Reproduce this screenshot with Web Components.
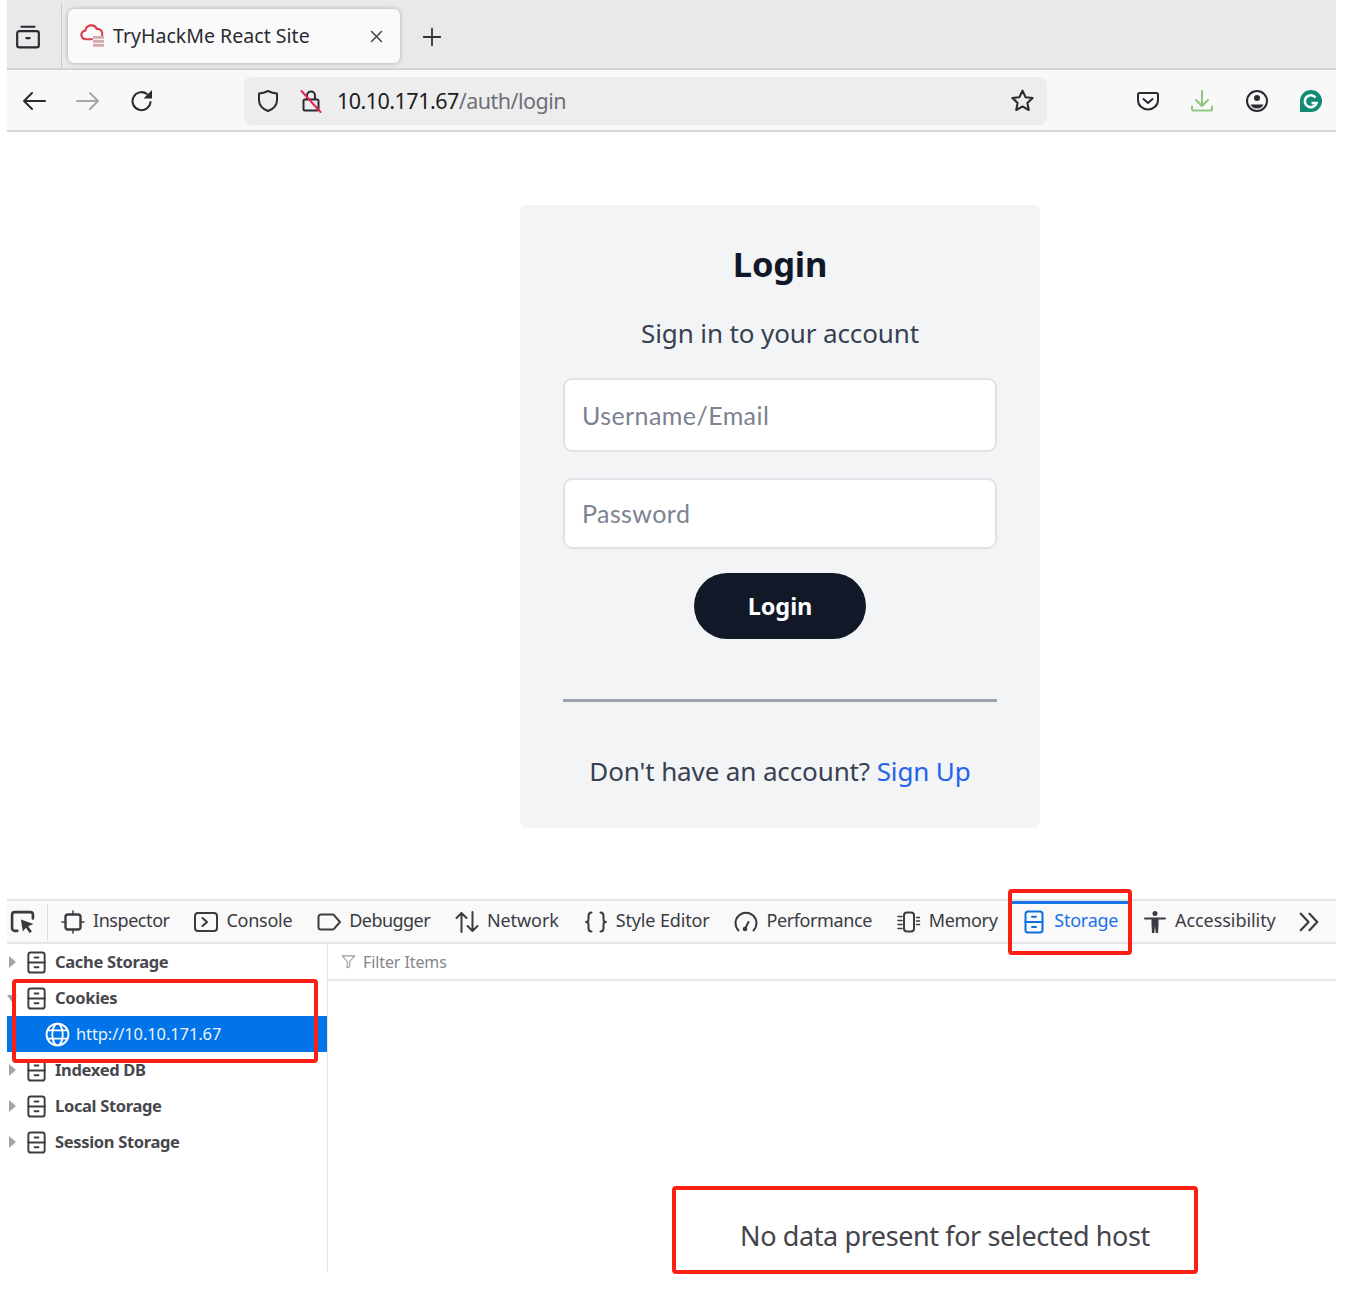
<!DOCTYPE html>
<html lang="en"><head><meta charset="utf-8"><title>TryHackMe React Site</title>
<style>
html,body{margin:0;padding:0;background:#fff}
body{font-family:"Noto Sans","Open Sans",sans-serif;width:1371px;height:1294px;position:relative;overflow:hidden}
</style></head><body>
<app-window></app-window>
<hl-box style="--x:1008px;--y:889px;--w:124px;--h:66px"></hl-box>
<hl-box style="--x:12px;--y:979px;--w:306px;--h:84px"></hl-box>
<hl-box style="--x:672px;--y:1186px;--w:526px;--h:88px"></hl-box>
<script>
const P={
archive:'<path d="M6 2.500h12M2 8.500a2 2 0 0 1 2-2h16a2 2 0 0 1 2 2v11a2 2 0 0 1-2 2H4a2 2 0 0 1-2-2z"/><path d="M10.500 13h3"/>',
back:'<path d="M23 12H2M10 4 2 12l8 8"/>',
reload:'<path d="M20.500 13a9 9 0 1 1-3.500-8"/><path d="M22 1v8.500h-8.500z" fill="currentColor" stroke="none"/>',
shield:'<path d="M12 2c3 1.600 6 2.400 9 2.600V11c0 5.500-3.500 9-9 11-5.500-2-9-5.500-9-11V4.600C6 4.400 9 3.600 12 2z"/>',
lock:'<path d="M8 10V6.500a4 4 0 0 1 8 0V10M6 10.500h12a1.500 1.500 0 0 1 1.500 1.500v8a1.500 1.500 0 0 1-1.500 1.500H6A1.500 1.500 0 0 1 4.500 20v-8A1.500 1.500 0 0 1 6 10.500z"/><path d="M2.500 2 21.500 23" stroke="#e22850"/>',
star:'<path d="m12 2.500 2.900 6.300 6.800.8-5 4.700 1.300 6.800-6-3.400-6 3.400 1.300-6.800-5-4.700 6.800-.8z"/>',
pocket:'<path d="M3.500 4h17A1.500 1.500 0 0 1 22 5.500V11c0 5.500-4.500 9.500-10 9.500S2 16.500 2 11V5.500A1.500 1.500 0 0 1 3.500 4z"/><path d="m7.500 10 4.500 4 4.500-4"/>',
download:'<path d="M12 2v15M6 11l6 6 6-6M2 17.500V20.500a1 1 0 0 0 1 1h18a1 1 0 0 0 1-1v-3"/>',
account:'<circle cx="12" cy="12" r="10"/><circle cx="12" cy="9" r="3" fill="currentColor" stroke="none"/><path d="M5.500 15.500h13c-1 2.800-3.500 4-6.500 4s-5.500-1.200-6.500-4z" fill="currentColor" stroke="none"/>',
close:'<path d="m5 5 14 14M19 5 5 19"/>',
plus:'<path d="M12 3v18M3 12h18"/>',
pick:'<path d="M9 3H4.500a2.500 2.500 0 0 0-2.500 2.500v13a2.500 2.500 0 0 0 2.500 2.500H7M9 3h10.500A2.500 2.500 0 0 1 22 5.500V9" stroke-width="2.500"/><path d="m10.500 10 12 4.500-5 2 3.500 5-2.200 1.500-3.500-5-3 3.500z" fill="currentColor" stroke="none"/>',
inspector:'<rect x="4.500" y="4.500" width="15" height="15" rx="2.500" stroke-width="2.400"/><path d="M12 1V4.500M12 19.500V23M1 12H4.500M19.500 12H23" stroke-width="1.500"/>',
console:'<rect x="1" y="3" width="22" height="18" rx="3"/><path d="m8.500 8 4.500 4-4.500 4"/>',
debugger:'<path d="M4 4.500h11.500a2 2 0 0 1 1.500.7l6 6.800-6 6.800a2 2 0 0 1-1.500.7H4a2.500 2.500 0 0 1-2.500-2.500V7A2.500 2.500 0 0 1 4 4.500z"/>',
network:'<path d="M6.500 22V3M1.500 8l5-5 5 5M17.500 2v19M12.500 16l5 5 5-5"/>',
style:'<path d="M7.500 2.500C5 2.500 4.500 4 4.500 6v3.500c0 1.500-.7 2.500-2.500 2.500 1.800 0 2.500 1 2.500 2.500V18c0 2 .5 3.500 3 3.500M16.500 2.500c2.500 0 3 1.500 3 3.500v3.500c0 1.500.7 2.500 2.500 2.500-1.800 0-2.500 1-2.500 2.500V18c0 2-.5 3.500-3 3.500"/>',
perf:'<path d="M4.500 20.500A10.500 10.500 0 1 1 19.500 20.500"/><circle cx="11" cy="19" r="2.300" fill="currentColor" stroke="none"/><path d="m11 19 3.500-7"/>',
memory:'<rect x="7" y="2.500" width="10" height="19" rx="3"/><path d="M1 6.500h4M1 10.500h4M1 14.500h4M1 18.500h4M19.500 7.500h3M19.500 11h3M19.500 14.500h3" stroke-width="1.500"/>',
cabinet:'<rect x="3.500" y="1.500" width="17" height="21" rx="2.500"/><path d="M3.500 12h17M10 6.800h4M10 17h4"/>',
access:'<circle cx="12" cy="3.500" r="2.500" fill="currentColor" stroke="none"/><path d="M2 8.500h20"/><path d="M8.500 8h7v6.500l-.5 8.500h-2.300L12 16l-.7 7H9l-.5-8.500z" fill="currentColor" stroke="none"/>',
chevrons:'<path d="m3 3 8.500 9L3 21M12.500 3l8.500 9-8.500 9"/>',
funnel:'<path d="M2 3h20l-8 9v8l-4 2V12z"/>',
globe:'<circle cx="12" cy="12" r="10.500"/><ellipse cx="12" cy="12" rx="5" ry="10.500"/><path d="M2.500 8h19M2.500 16h19"/>',
cloud:'<path d="M11 15H5.500a4 4 0 0 1-.5-8 5.500 5.500 0 0 1 10.500-1.500 4.500 4.500 0 0 1 5 5.500"/>'
};
function def(name,html,extra){
  const t=document.createElement('template');t.innerHTML=html;
  customElements.define(name,class extends HTMLElement{
    constructor(){super();this.attachShadow({mode:'open'}).appendChild(t.content.cloneNode(true));}
    connectedCallback(){extra&&extra.call(this);}
  });
}
def('x-icon',`<style>:host{display:inline-flex;flex:none;width:var(--s,24px);height:var(--s,24px)}svg{width:100%;height:100%;fill:none;stroke:currentColor;stroke-width:var(--sw,2);stroke-linecap:round;stroke-linejoin:round;overflow:visible}</style><svg viewBox="0 0 24 24"></svg>`,function(){this.shadowRoot.querySelector('svg').innerHTML=P[this.getAttribute('name')]||'';});
def('hl-box',`<style>:host{position:absolute;left:var(--x);top:var(--y);width:var(--w);height:var(--h);box-sizing:border-box;border:4px solid #fb2013;border-radius:4px;pointer-events:none}</style>`);

def('tab-bar',`<style>
:host{display:flex;align-items:stretch;height:68px;background:#e9e9e9;border-bottom:2px solid #d3d3d3;color:#2b2a33;box-sizing:content-box}
.side{width:55px;display:flex;align-items:center;padding-top:2px;box-sizing:border-box;padding-left:8px;border-right:1px solid #c9c9c9;margin-top:3px}
.tab{width:332px;height:54px;margin:9px 0 0 6px;background:#fafafa;border-radius:6px;box-shadow:0 0 4px rgba(0,0,0,.28);display:flex;align-items:center;box-sizing:border-box;padding-left:12px}
.fav{position:relative;width:26px;height:26px;flex:none;color:#d8404a}
.fav i{position:absolute;left:13px;top:13px;width:11px;height:11px;background:repeating-linear-gradient(180deg,#c9a0a4 0 2px,#e6b0b4 2px 3px,#f2f0f0 3px 4px);opacity:.9}
.title{margin:-1px 0 0 7px;font-size:19.500px;white-space:nowrap;width:255px;letter-spacing:.03px}
.close{color:#444}
.plus{margin:5px 0 0 21px;align-self:center;color:#333}
</style>
<div class="side"><x-icon name="archive" style="--s:26px"></x-icon></div>
<div class="tab"><span class="fav"><x-icon name="cloud" style="--s:26px"></x-icon><i></i></span><span class="title">TryHackMe React Site</span><x-icon class="close" name="close" style="--s:17px;--sw:2.200"></x-icon></div>
<x-icon class="plus" name="plus" style="--s:22px;--sw:2"></x-icon>`);

def('nav-bar',`<style>
:host{display:flex;align-items:center;height:60px;background:#f8f8f8;border-bottom:2px solid #d8d8d8;color:#2b2a33}
.l{display:flex;gap:30px;margin:2px 0 0 15px;width:222px;flex:none}
.url{width:803px;height:48px;background:#ededed;border-radius:7px;display:flex;align-items:center;box-sizing:border-box;padding:0 12px;margin-top:1px;flex:none}
.url .txt{margin-left:14px;font-size:21.500px;white-space:nowrap;flex:1;letter-spacing:-.52px}
.txt b{font-weight:400;color:#1c1b22}.txt span{color:#6f6f78}
.r{display:flex;margin:2px 0 0 89px;gap:30.300px;align-items:center}
</style>
<div class="l"><x-icon name="back"></x-icon><x-icon name="back" style="color:#a6a6a9;transform:scaleX(-1)"></x-icon><x-icon name="reload"></x-icon></div>
<div class="url"><x-icon name="shield" style="--s:24px"></x-icon><x-icon name="lock" style="--s:24px;margin-left:19px"></x-icon><div class="txt"><b>10.10.171.67</b><span>/auth/login</span></div><x-icon name="star" style="--s:25px"></x-icon></div>
<div class="r"><x-icon name="pocket"></x-icon><x-icon name="download" style="color:#93c47d"></x-icon><x-icon name="account"></x-icon><gram-logo></gram-logo></div>`);

def('gram-logo',`<style>:host{display:inline-flex;width:24px;height:24px}svg{width:24px;height:24px}</style>
<svg viewBox="0 0 24 24"><path d="M12 1a11 11 0 1 1 0 22H1V12A11 11 0 0 1 12 1z" fill="#138a72"/><path d="M16.500 8.500a6 6 0 1 0 1 5.500H12.500" fill="none" stroke="#fff" stroke-width="2.600"/></svg>`);

def('login-card',`<style>
:host{display:block;width:520px;box-sizing:border-box;background:#f3f4f6;border-radius:6px;padding:39px 44px 39px;text-align:center;font-family:"Noto Sans",sans-serif}
h2{margin:0;font-size:34.500px;line-height:40px;font-weight:700;color:#111827;letter-spacing:-.2px}
p.s{margin:31px 0 0;font-size:26px;line-height:36px;color:#374151;letter-spacing:-.12px}
.in{box-sizing:border-box;display:flex;align-items:center;background:#fff;border:2px solid #e0e2e6;border-radius:9px;padding:0 0 0 17px;text-align:left;color:#7b8290;font-size:25px;font-family:Lato,sans-serif;letter-spacing:.42px}
.a{height:74px;margin:27px -1px 0}.b{height:71px;margin:26px -1px 0;padding-bottom:2px}
.btn{display:flex;align-items:center;justify-content:center;width:172px;height:66px;border-radius:33px;background:#111827;color:#fff;font-weight:700;font-size:23.500px;margin:24px auto 0;letter-spacing:-.1px}
hr{border:0;height:3px;background:#9ca3af;margin:60px -1px 0 -1px}
p.f{margin:51px 0 0;font-size:26px;line-height:36px;color:#374151;letter-spacing:-.12px}
a{color:#2563eb;text-decoration:none}
</style>
<h2>Login</h2><p class="s">Sign in to your account</p>
<div class="in a">Username/Email</div><div class="in b">Password</div>
<div class="btn">Login</div><hr>
<p class="f">Don't have an account? <a href="#">Sign Up</a></p>`);

def('dt-tab',`<style>
:host{display:flex;align-items:center;gap:8px;color:#3b3b42;font-size:18px;white-space:nowrap}
:host([on]){color:#1a73e8}
span{margin-top:-3px}
</style><slot name="i"></slot><span><slot></slot></span>`);

def('dt-bar',`<style>
:host{display:flex;align-items:center;box-sizing:border-box;height:45px;background:#f9f9fa;border-top:2px solid #e4e4e6;border-bottom:2px solid #e4e4e6;padding-left:3px;position:relative}
.p{color:#38383d;margin-right:13px;padding-right:12px;border-right:1px solid #dcdcdc;display:flex;height:36px;align-items:center}
.tabs{display:flex;gap:24.800px;height:100%}
.on{position:absolute;left:1005px;width:118px;top:0;height:3px;background:#1a73e8}
.c{margin-left:22px;color:#3b3b42}
</style>
<div class="p"><x-icon name="pick" style="--s:25px"></x-icon></div>
<div class="tabs">
<dt-tab style="letter-spacing:-.44px"><x-icon slot="i" name="inspector"></x-icon>Inspector</dt-tab>
<dt-tab style="letter-spacing:-.24px"><x-icon slot="i" name="console"></x-icon>Console</dt-tab>
<dt-tab style="letter-spacing:-.54px"><x-icon slot="i" name="debugger"></x-icon>Debugger</dt-tab>
<dt-tab style="letter-spacing:-.07px"><x-icon slot="i" name="network"></x-icon>Network</dt-tab>
<dt-tab style="letter-spacing:-.13px"><x-icon slot="i" name="style"></x-icon>Style Editor</dt-tab>
<dt-tab style="letter-spacing:-.4px"><x-icon slot="i" name="perf"></x-icon>Performance</dt-tab>
<dt-tab style="letter-spacing:-.33px"><x-icon slot="i" name="memory"></x-icon>Memory</dt-tab>
<dt-tab on style="letter-spacing:-.26px"><x-icon slot="i" name="cabinet" style="color:#0a6fe0"></x-icon>Storage</dt-tab>
<dt-tab style="letter-spacing:-.06px"><x-icon slot="i" name="access"></x-icon>Accessibility</dt-tab>
</div><x-icon class="c" name="chevrons" style="--s:22px;--sw:2.400"></x-icon><div class="on"></div>`);

def('tree-row',`<style>
:host{display:flex;align-items:center;height:36px;font-weight:700;font-size:16.500px;color:#47474d;letter-spacing:-.33px;white-space:nowrap}
.t{width:0;height:0;margin-left:2px;border-left:7px solid #a3a3a6;border-top:6px solid transparent;border-bottom:6px solid transparent}
:host([open]) .t{margin-left:0;border-left:5px solid transparent;border-right:5px solid transparent;border-top:7px solid #a3a3a6;border-bottom:0}
:host([open]) x-icon{margin-left:8px}
x-icon{margin-left:9px;margin-right:7px;color:#3c3c42;--s:23px}
span.x{margin-top:-2px}
</style><span class="t"></span><x-icon name="cabinet"></x-icon><span class="x"><slot></slot></span>`);

def('dt-panel',`<style>
:host{display:flex;height:327px}
.side{width:320px;flex:none;border-right:1px solid #e4e4e6}
.sel{display:flex;align-items:center;height:36px;background:#0074e8;color:#e8f2fd;font-size:16.500px;padding-left:38px;letter-spacing:-.1px}
.sel x-icon{--s:25px;margin-right:6px;color:#fff;--sw:1.800}
.sel span{margin-top:-2px}
.main{flex:1;display:flex;flex-direction:column}
.filter{height:35px;border-bottom:2px solid #e8e8e8;display:flex;align-items:center;padding-left:13px;color:#85858b;font-size:16px;letter-spacing:-.1px}
.filter x-icon{--s:15px;margin-right:7px;color:#9a9a9f;--sw:1.800}
.empty{flex:1;display:flex;justify-content:center;align-items:flex-start;padding:237px 0 0 226px;font-size:27px;line-height:36px;color:#44444a;letter-spacing:-.4px;white-space:nowrap}
</style>
<div class="side">
<tree-row>Cache Storage</tree-row>
<tree-row open>Cookies</tree-row>
<div class="sel"><x-icon name="globe"></x-icon><span>http://10.10.171.67</span></div>
<tree-row>Indexed DB</tree-row>
<tree-row>Local Storage</tree-row>
<tree-row>Session Storage</tree-row>
</div>
<div class="main"><div class="filter"><x-icon name="funnel"></x-icon>Filter Items</div><div class="empty">No data present for selected host</div></div>`);

def('app-window',`<style>
:host{display:block;width:1329px;margin-left:7px}
.page{height:767px;display:flex;padding:73px 0 0 513px;box-sizing:border-box;background:#fff}
login-card{align-self:flex-start}
</style>
<tab-bar></tab-bar><nav-bar></nav-bar>
<div class="page"><login-card></login-card></div>
<dt-bar></dt-bar><dt-panel></dt-panel>`);
</script>
</body></html>
